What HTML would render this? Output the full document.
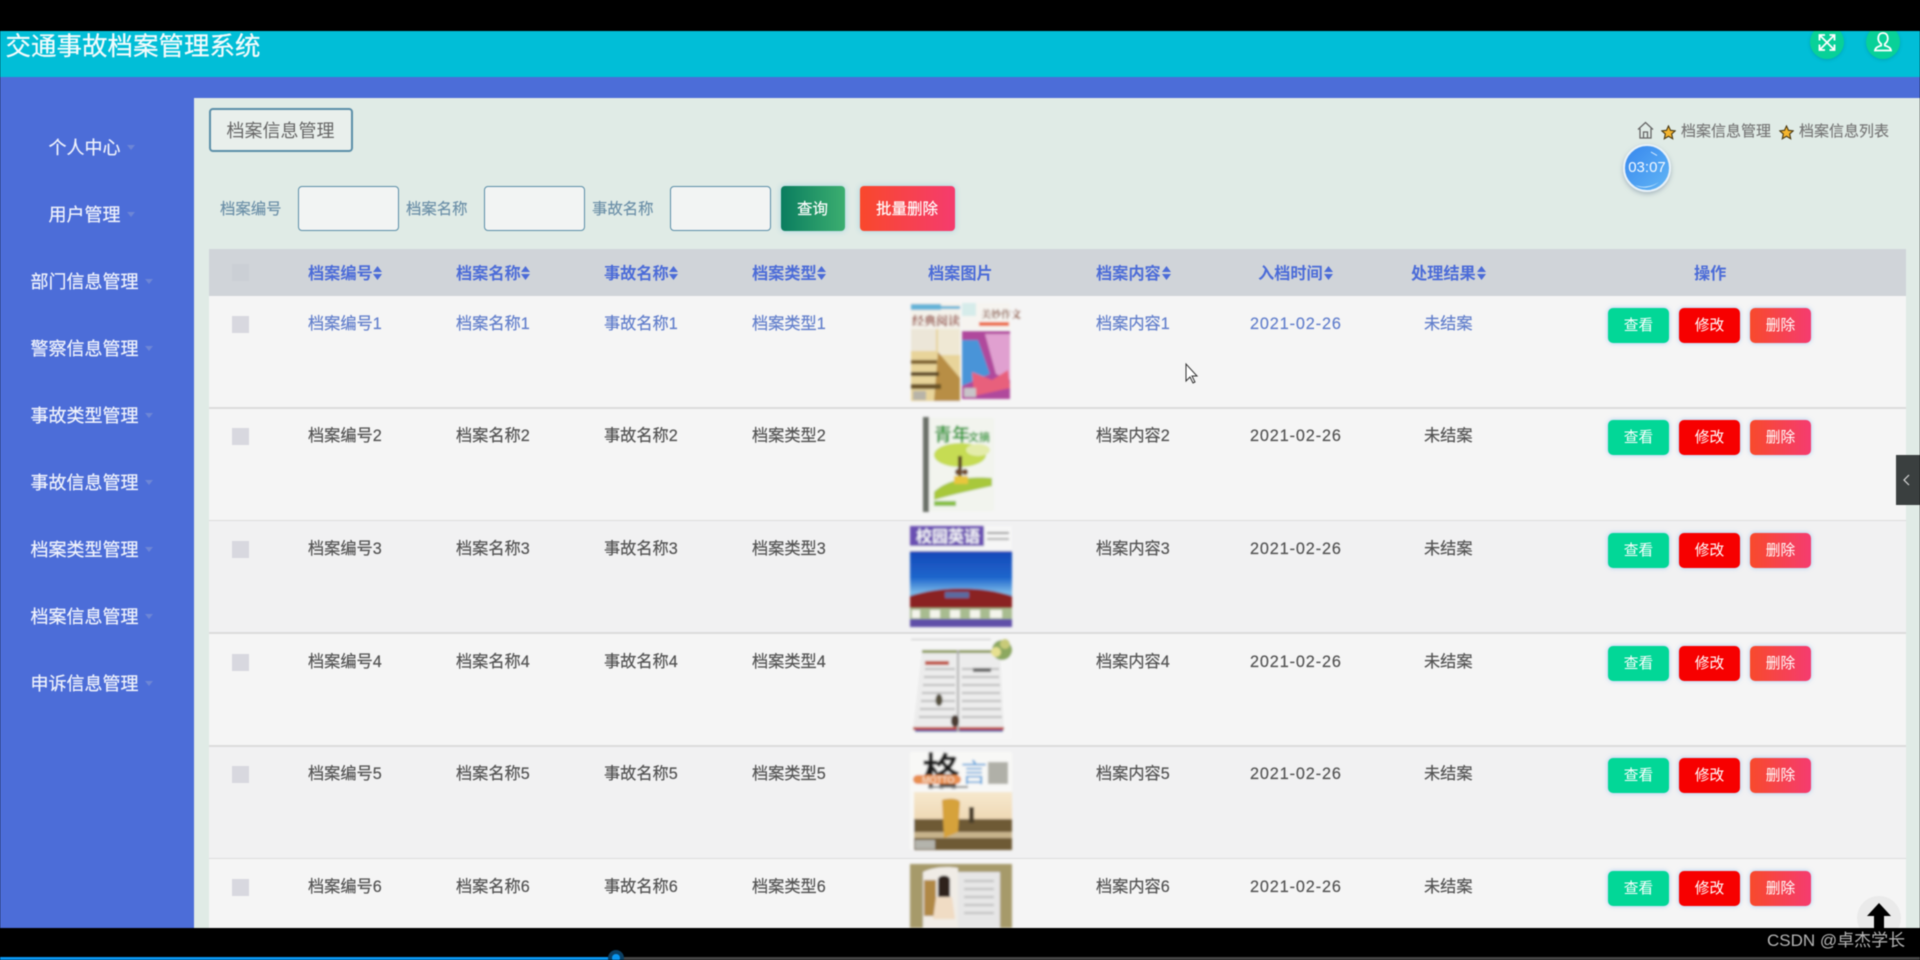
<!DOCTYPE html>
<html lang="zh">
<head>
<meta charset="utf-8">
<title>交通事故档案管理系统</title>
<style>
html,body{margin:0;padding:0;width:1920px;height:960px;overflow:hidden;background:#000;}
body{font-family:"Liberation Sans","Noto Sans CJK SC",sans-serif;position:relative;}
div,span{position:absolute;white-space:nowrap;}
#app{left:0;top:0;width:1920px;height:960px;overflow:hidden;filter:blur(.5px);}
.top{left:0;top:31px;width:1920px;height:46px;background:#01bed7;overflow:hidden;}
.title{left:5.500px;top:-2.500px;font-size:25.5px;line-height:36px;color:#f2fbfc;-webkit-text-stroke:.25px #f2fbfc;}
.rnd{width:34px;height:34px;border-radius:50%;background:#08d198;top:-6px;box-shadow:0 1px 3px rgba(0,120,120,.35);}
.band{left:0;top:77px;width:1920px;height:21px;background:#4c6dd8;}
.side{left:0;top:98px;width:194px;height:830px;background:#4c6dd8;}
.m{color:#f0f3fc;font-size:18px;line-height:26px;left:-.5px;width:170px;text-align:center;-webkit-text-stroke:.2px #f0f3fc;}
.car{width:0;height:0;border-left:4.500px solid transparent;border-right:4.500px solid transparent;border-top:5.500px solid #6d86d6;}
.main{left:194px;top:98px;width:1726px;height:830px;background:#e0ebe6;}
.tag{left:209px;top:108px;width:140px;height:40px;border:2px solid #5a8ea8;border-radius:4px;background:#e9efec;color:#666;font-size:18px;line-height:42px;text-align:center;text-indent:-1px;}
.lb{font-size:15.4px;color:#6b8fa8;line-height:24px;top:198px;-webkit-text-stroke:.15px #6b8fa8;}
.ipt{top:186px;width:99px;height:43px;border:1px solid #5a8ea8;border-radius:4px;background:#f2f4f3;}
.sb{top:186px;height:45px;border-radius:4px;color:#fff;font-size:15.5px;line-height:47px;text-align:center;box-shadow:0 0 6px rgba(90,180,220,.45);-webkit-text-stroke:.15px #fff;text-indent:-1px;}
.thead{left:209px;top:249px;width:1697px;height:47px;background:#d0d4d9;}
.th{top:260.500px;line-height:26px;font-size:16.2px;color:#4c6cd8;font-weight:bold;}
.so{top:265px;width:9px;height:16px;}
.row{left:209px;width:1697px;height:111px;background:#f5f5f5;border-bottom:2px solid #dcdcdc;}
.alt{background:#f1f1f2;}
.cb{left:23px;top:19.500px;width:17px;height:17px;background:#d8d8df;}
.c{top:15.500px;line-height:24px;font-size:16.2px;color:#555;-webkit-text-stroke:.2px #555;}
.r1 .c{color:#6480cc;-webkit-text-stroke:.2px #6480cc;}
.c1{left:99px}.c2{left:247px}.c3{left:395px}.c4{left:543px}.c5{left:887px}.c7{left:1215px}
.c6{left:1041px;letter-spacing:.9px}
.b{top:11.500px;width:61px;height:35px;border-radius:5px;color:#fff;font-size:14.7px;line-height:37px;text-align:center;box-shadow:0 0 5px rgba(110,170,240,.6);}
.b1{left:1399px;background:#02d797;}
.b2{left:1470px;background:#f70000;}
.b3{left:1541px;background:linear-gradient(90deg,#f84a2c,#f53c70);}
.bc{top:119.500px;line-height:24px;font-size:15px;color:#777;-webkit-text-stroke:.15px #777;}
.clock{left:1623px;top:144px;width:44px;height:44px;border:2px solid #e8f1f8;border-radius:50%;background:linear-gradient(135deg,#3787ee,#62b6f6);box-shadow:0 2px 5px rgba(120,140,160,.55);color:#f3f9ff;font-size:15px;line-height:44px;text-align:center;overflow:hidden;}
.tab{left:1896px;top:455px;width:24px;height:50px;background:#3a3f3f;}
.up{left:1857px;top:896px;width:44px;height:44px;border-radius:50%;background:#eaeaea;}
.btm{left:0;top:928px;width:1920px;height:32px;background:#000;}
.wm{left:1767px;top:929px;font-size:17px;line-height:24px;color:#b4b4b4;}
.pg{left:0;top:957px;width:616px;height:3px;background:#0a96f0;}
.pg2{left:616px;top:957px;width:1304px;height:3px;background:#444;}
.dot{left:608px;top:950px;width:16px;height:16px;border-radius:50%;background:#0b3f63;}
.dot2{left:612px;top:954px;width:8px;height:8px;border-radius:50%;background:#0a96f0;}
</style>
</head>
<body>
<div id="app">
  <div class="top">
    <div class="title">交通事故档案管理系统</div>
    <div class="rnd" style="left:1810px"></div>
    <div class="rnd" style="left:1866px"></div>
    <svg style="position:absolute;left:1810px;top:-6px" width="34" height="34" viewBox="0 0 34 34" fill="none" stroke="#fff" stroke-width="1.800"><path d="M9.500 10l15 15M24.500 10l-15 15M9.500 15.500V10h5.500M19.500 10h5v5.500M9.500 19.500V25H15M24.500 19.500V25h-5"/></svg>
    <svg style="position:absolute;left:1866px;top:-6px" width="34" height="34" viewBox="0 0 34 34" fill="none" stroke="#fff" stroke-width="1.800"><path d="M17 8c3.500 0 4.800 2.500 4.800 5.500s-1.800 4.500-3 5.500v1.500c2.500 1 5.700 1.500 6.200 5H9c.5-3.500 3.700-4 6.200-5V19c-1.200-1-3-2.500-3-5.500S13.500 8 17 8z"/></svg>
  </div>
  <div class="band"></div>
  <div class="side"></div>
  <div class="main"></div>

  <div class="m" style="top:134.500px">个人中心</div><div class="car" style="left:127px;top:145px"></div>
  <div class="m" style="top:201.500px">用户管理</div><div class="car" style="left:127px;top:212px"></div>
  <div class="m" style="top:268.500px">部门信息管理</div><div class="car" style="left:145px;top:279px"></div>
  <div class="m" style="top:335.500px">警察信息管理</div><div class="car" style="left:145px;top:346px"></div>
  <div class="m" style="top:402.500px">事故类型管理</div><div class="car" style="left:145px;top:413px"></div>
  <div class="m" style="top:469.500px">事故信息管理</div><div class="car" style="left:145px;top:480px"></div>
  <div class="m" style="top:536.500px">档案类型管理</div><div class="car" style="left:145px;top:547px"></div>
  <div class="m" style="top:603.500px">档案信息管理</div><div class="car" style="left:145px;top:614px"></div>
  <div class="m" style="top:670.500px">申诉信息管理</div><div class="car" style="left:145px;top:681px"></div>

  <div class="tag">档案信息管理</div>

  <svg style="position:absolute;left:1637px;top:121px" width="17" height="18" viewBox="0 0 17 18" fill="none" stroke="#666" stroke-width="1.300"><path d="M1 8.500L8.500 1.500 16 8.500M3 7.500V17h11V7.500M6.500 17v-6h4v6"/></svg>
  <svg style="position:absolute;left:1660.500px;top:124.500px" width="15" height="15" viewBox="0 0 24 24"><path d="M12 1.500l3.200 7 7.600.8-5.700 5.100 1.600 7.500L12 18l-6.700 3.900 1.600-7.500L1.200 9.300l7.600-.8z" fill="#f5b52e" stroke="#4a3a14" stroke-width="1.800"/></svg>
  <span class="bc" style="left:1681px">档案信息管理</span>
  <svg style="position:absolute;left:1778.500px;top:124.500px" width="15" height="15" viewBox="0 0 24 24"><path d="M12 1.500l3.200 7 7.600.8-5.700 5.100 1.600 7.500L12 18l-6.700 3.900 1.600-7.500L1.200 9.300l7.600-.8z" fill="#f5b52e" stroke="#4a3a14" stroke-width="1.800"/></svg>
  <span class="bc" style="left:1799px">档案信息列表</span>
  <div class="clock">03:07</div>
  <svg style="position:absolute;left:1623px;top:144px" width="48" height="48" viewBox="0 0 48 48" fill="none"><path d="M28 8l6 3.500" stroke="#dff0ff" stroke-width="1"/><path d="M12 41c8 3 16 2 24-3-6 5-16 8-24 3z" fill="#cfeafc"/></svg>

  <span class="lb" style="left:220px">档案编号</span>
  <div class="ipt" style="left:298px"></div>
  <span class="lb" style="left:406px">档案名称</span>
  <div class="ipt" style="left:484px"></div>
  <span class="lb" style="left:592px">事故名称</span>
  <div class="ipt" style="left:670px"></div>
  <div class="sb" style="left:781px;width:64px;background:linear-gradient(90deg,#0a7d5f,#3cae70)">查询</div>
  <div class="sb" style="left:860px;width:95px;background:linear-gradient(90deg,#f9482c,#f53c6e)">批量删除</div>

  <div class="thead"><div style="left:23px;top:15px;width:17px;height:17px;background:#cbcfd5"></div></div>
  <span class="th" style="left:308px">档案编号</span>
  <span class="th" style="left:456px">档案名称</span>
  <span class="th" style="left:604px">事故名称</span>
  <span class="th" style="left:752px">档案类型</span>
  <span class="th" style="left:928px">档案图片</span>
  <span class="th" style="left:1096px">档案内容</span>
  <span class="th" style="left:1258px">入档时间</span>
  <span class="th" style="left:1411px">处理结果</span>
  <span class="th" style="left:1694px">操作</span>
  <svg class="so" style="position:absolute;left:373px;top:265px" width="9" height="16" viewBox="0 0 9 16" fill="#4c6cd8"><path d="M4.500 1L9 7H0zM0 9h9l-4.500 6z"/></svg>
  <svg class="so" style="position:absolute;left:521px;top:265px" width="9" height="16" viewBox="0 0 9 16" fill="#4c6cd8"><path d="M4.500 1L9 7H0zM0 9h9l-4.500 6z"/></svg>
  <svg class="so" style="position:absolute;left:669px;top:265px" width="9" height="16" viewBox="0 0 9 16" fill="#4c6cd8"><path d="M4.500 1L9 7H0zM0 9h9l-4.500 6z"/></svg>
  <svg class="so" style="position:absolute;left:817px;top:265px" width="9" height="16" viewBox="0 0 9 16" fill="#4c6cd8"><path d="M4.500 1L9 7H0zM0 9h9l-4.500 6z"/></svg>
  <svg class="so" style="position:absolute;left:1162px;top:265px" width="9" height="16" viewBox="0 0 9 16" fill="#4c6cd8"><path d="M4.500 1L9 7H0zM0 9h9l-4.500 6z"/></svg>
  <svg class="so" style="position:absolute;left:1324px;top:265px" width="9" height="16" viewBox="0 0 9 16" fill="#4c6cd8"><path d="M4.500 1L9 7H0zM0 9h9l-4.500 6z"/></svg>
  <svg class="so" style="position:absolute;left:1477px;top:265px" width="9" height="16" viewBox="0 0 9 16" fill="#4c6cd8"><path d="M4.500 1L9 7H0zM0 9h9l-4.500 6z"/></svg>

  <div class="row r1" style="top:296px">
    <div class="cb"></div>
    <span class="c c1">档案编号1</span><span class="c c2">档案名称1</span><span class="c c3">事故名称1</span><span class="c c4">档案类型1</span><span class="c c5">档案内容1</span><span class="c c6">2021-02-26</span><span class="c c7">未结案</span>
    <div class="b b1" style="top:12px">查看</div><div class="b b2" style="top:12px">修改</div><div class="b b3" style="top:12px">删除</div>
  </div>
  <div class="row" style="top:408.700px">
    <div class="cb"></div>
    <span class="c c1">档案编号2</span><span class="c c2">档案名称2</span><span class="c c3">事故名称2</span><span class="c c4">档案类型2</span><span class="c c5">档案内容2</span><span class="c c6">2021-02-26</span><span class="c c7">未结案</span>
    <div class="b b1">查看</div><div class="b b2">修改</div><div class="b b3">删除</div>
  </div>
  <div class="row alt" style="top:521.300px">
    <div class="cb"></div>
    <span class="c c1">档案编号3</span><span class="c c2">档案名称3</span><span class="c c3">事故名称3</span><span class="c c4">档案类型3</span><span class="c c5">档案内容3</span><span class="c c6">2021-02-26</span><span class="c c7">未结案</span>
    <div class="b b1">查看</div><div class="b b2">修改</div><div class="b b3">删除</div>
  </div>
  <div class="row" style="top:634px">
    <div class="cb"></div>
    <span class="c c1">档案编号4</span><span class="c c2">档案名称4</span><span class="c c3">事故名称4</span><span class="c c4">档案类型4</span><span class="c c5">档案内容4</span><span class="c c6">2021-02-26</span><span class="c c7">未结案</span>
    <div class="b b1">查看</div><div class="b b2">修改</div><div class="b b3">删除</div>
  </div>
  <div class="row alt" style="top:746.600px">
    <div class="cb"></div>
    <span class="c c1">档案编号5</span><span class="c c2">档案名称5</span><span class="c c3">事故名称5</span><span class="c c4">档案类型5</span><span class="c c5">档案内容5</span><span class="c c6">2021-02-26</span><span class="c c7">未结案</span>
    <div class="b b1">查看</div><div class="b b2">修改</div><div class="b b3">删除</div>
  </div>
  <div class="row" style="top:859.200px">
    <div class="cb"></div>
    <span class="c c1">档案编号6</span><span class="c c2">档案名称6</span><span class="c c3">事故名称6</span><span class="c c4">档案类型6</span><span class="c c5">档案内容6</span><span class="c c6">2021-02-26</span><span class="c c7">未结案</span>
    <div class="b b1">查看</div><div class="b b2">修改</div><div class="b b3">删除</div>
  </div>

  <svg style="position:absolute;left:0;top:0" width="1920" height="960" viewBox="0 0 1920 960">
    <defs>
      <filter id="bl" x="-5%" y="-5%" width="110%" height="110%"><feGaussianBlur stdDeviation="1"/></filter>
      <linearGradient id="sky" x1="0" y1="0" x2="0" y2="1"><stop offset="0" stop-color="#1648b8"/><stop offset=".35" stop-color="#1e66cc"/><stop offset=".55" stop-color="#7ab8e8"/><stop offset=".7" stop-color="#3f88d4"/></linearGradient>
      <linearGradient id="sand" x1="0" y1="0" x2="0" y2="1"><stop offset="0" stop-color="#f6e8ce"/><stop offset="1" stop-color="#e8c898"/></linearGradient>
    </defs>
    <g filter="url(#bl)">
      <!-- row 1 covers -->
      <rect x="911" y="303" width="49" height="99" fill="#f4f2ea"/>
      <rect x="911" y="304" width="30" height="6" fill="#63b4d8"/><rect x="941" y="306" width="19" height="3" fill="#63b4d8"/>
      <text x="912" y="325" font-size="12" font-weight="bold" fill="#8a2c20" font-family="Noto Serif CJK SC,serif">经典阅读</text>
      <rect x="911" y="329" width="49" height="72" fill="#e8d49a"/>
      <rect x="911" y="329" width="25" height="22" fill="#ece6d8"/>
      <rect x="938" y="329" width="22" height="26" fill="#efe8d4"/>
      <path d="M938 352l22 26v23h-26z" fill="#b88e44"/>
      <rect x="911" y="360" width="26" height="4" fill="#7b5e2c"/><rect x="911" y="372" width="28" height="4" fill="#5c4620"/><rect x="911" y="384" width="30" height="5" fill="#6a5226"/>
      <rect x="913" y="391" width="13" height="9" fill="#b8b4a8"/>
      <rect x="962" y="303" width="48" height="27" fill="#f6f4f0"/>
      <text x="981" y="318" font-size="10" font-weight="bold" fill="#8b5a4a" font-family="Noto Serif CJK SC,serif">美妙作文</text>
      <rect x="962" y="303" width="14" height="13" fill="#d6ecea"/>
      <rect x="979" y="322" width="30" height="4" fill="#ee6a42"/>
      <rect x="962" y="331" width="48" height="68" fill="#b04a9c"/>
      <path d="M962 340l16 0 12 34-28 12z" fill="#4a94d8"/>
      <path d="M985 334h25v46l-14-6z" fill="#e0a0d0"/>
      <path d="M972 372l20 8 16-10 2 18-36 8z" fill="#e8607c"/>
      <rect x="964" y="388" width="12" height="9" fill="#c8c4c8"/>
      <!-- row 2 book -->
      <rect x="923" y="417" width="6" height="95" fill="#6a6f68"/>
      <rect x="929" y="418" width="65" height="93" fill="#f2f4ee"/>
      <text x="934" y="441" font-size="18" font-weight="bold" fill="#1e9a2a">青年</text>
      <text x="968" y="441" font-size="11" font-weight="bold" fill="#1e9a2a">文摘</text>
      <ellipse cx="960" cy="455" rx="26" ry="12" fill="#c6dc52"/>
      <ellipse cx="978" cy="450" rx="12" ry="6" fill="#e4ecaa"/>
      <rect x="958" y="456" width="4" height="20" fill="#5d4426"/>
      <path d="M934 500v-8c14-14 40-16 58-14v8c-18 4-38 8-58 14z" fill="#a8c83a"/>
      <rect x="954" y="476" width="14" height="8" fill="#e8c63e"/>
      <circle cx="958" cy="472" r="3" fill="#704a2a"/><circle cx="965" cy="472" r="3" fill="#704a2a"/>
      <rect x="934" y="501" width="22" height="5" fill="#88c040"/>
      <!-- row 3 -->
      <rect x="910" y="526" width="102" height="101" fill="#f6f6f6"/>
      <rect x="910" y="526" width="74" height="20" fill="#6a50b2"/>
      <text x="916" y="542" font-size="16" font-weight="bold" fill="#f4f4f8">校园英语</text>
      <rect x="987" y="532" width="22" height="2" fill="#999"/><rect x="987" y="538" width="22" height="2" fill="#aaa"/>
      <rect x="910" y="551" width="102" height="76" fill="url(#sky)"/>
      <path d="M910 596c30-10 72-10 102 0v14H910z" fill="#8a2422"/>
      <rect x="945" y="592" width="24" height="6" fill="#5c6aa0"/>
      <rect x="910" y="608" width="102" height="11" fill="#a8bc90"/>
      <path d="M912 610h8v8h-8zM930 610h10v8h-10zM950 610h10v8h-10zM970 610h10v8h-10zM990 610h12v8h-12z" fill="#f4f4ec"/>
      <rect x="910" y="619" width="102" height="8" fill="#5e50a8"/>
      <!-- row 4 -->
      <rect x="910" y="639" width="102" height="100" fill="#f6f6f6"/>
      <rect x="911" y="639" width="80" height="1" fill="#c0c0c0"/>
      <path d="M922 650h78l4 80H913z" fill="#ececec"/>
      <path d="M922 650h78v3h-78z" fill="#8a9a50"/><path d="M913 727h91v3h-91z" fill="#c04838"/>
      <path d="M915 730h88v2h-88z" fill="#3c5cae"/>
      <rect x="957" y="650" width="2" height="82" fill="#b0b0b0"/>
      <g fill="#bcbcbc">
        <rect x="925" y="668" width="30" height="2"/><rect x="924" y="676" width="31" height="2"/><rect x="923" y="684" width="32" height="2"/><rect x="922" y="692" width="33" height="2"/><rect x="921" y="700" width="34" height="2"/><rect x="920" y="708" width="35" height="2"/><rect x="919" y="716" width="36" height="2"/>
        <rect x="962" y="668" width="37" height="2"/><rect x="962" y="676" width="37" height="2"/><rect x="962" y="684" width="38" height="2"/><rect x="962" y="692" width="38" height="2"/><rect x="962" y="700" width="39" height="2"/><rect x="962" y="708" width="39" height="2"/><rect x="962" y="716" width="40" height="2"/>
      </g>
      <rect x="925" y="661" width="24" height="4" fill="#c0503c"/>
      <rect x="973" y="668" width="18" height="4" fill="#666"/>
      <ellipse cx="939" cy="700" rx="3.500" ry="6" fill="#55503c"/>
      <ellipse cx="955" cy="721" rx="4" ry="6" fill="#4a3a30"/>
      <circle cx="1002" cy="650" r="10" fill="#8ca860"/>
      <circle cx="996" cy="652" r="5" fill="#e6e090"/><circle cx="1005" cy="644" r="5" fill="#c8ca78"/>
      <!-- row 5 -->
      <rect x="910" y="752" width="102" height="98" fill="#f8f8f6"/>
      <text x="922" y="785" font-size="38" font-weight="bold" fill="#1a1a1a" font-family="Noto Sans CJK SC,sans-serif">格</text>
      <text x="961" y="782" font-size="26" fill="#5ea4dc">言</text>
      <rect x="988" y="762" width="20" height="22" fill="#b0b0a8"/>
      <rect x="913" y="775" width="48" height="9" rx="4.500" fill="#e88e50"/>
      <text x="922" y="783" font-size="9" fill="#f8f0e0">MOTTO</text>
      <rect x="928" y="786" width="40" height="2" fill="#888"/>
      <rect x="914" y="792" width="98" height="58" fill="url(#sand)"/>
      <rect x="914" y="819" width="98" height="31" fill="#6e5a34"/>
      <rect x="914" y="832" width="98" height="6" fill="#c8b48c"/>
      <path d="M942 800c6-2 16-2 18 2l-2 30-14 6z" fill="#d6a23a"/>
      <rect x="969" y="807" width="5" height="16" fill="#4a3e2c"/>
      <rect x="915" y="840" width="20" height="9" fill="#b4b4ac"/>
      <!-- row 6 -->
      <rect x="910" y="864" width="102" height="64" fill="#a69a6a"/>
      <path d="M923 872c10-5 24-6 35-4v60h-35z" fill="#f0ece6"/>
      <path d="M958 872h42v56h-42z" fill="#e6e6e6"/>
      <g fill="#c0c0c0"><rect x="964" y="880" width="30" height="2"/><rect x="964" y="888" width="30" height="2"/><rect x="964" y="896" width="30" height="2"/><rect x="964" y="904" width="30" height="2"/><rect x="964" y="912" width="30" height="2"/></g>
      <rect x="924" y="880" width="12" height="36" fill="#b08844"/>
      <path d="M938 880c0-6 12-6 12 0v18h-12z" fill="#2e241e"/>
      <path d="M936 897h16l3 22h-22z" fill="#f0dcc4"/>
    </g>
    <!-- cursor -->
    <path d="M1186 364v17l4-4 3 6 2-1-3-6h5z" fill="#fff" stroke="#333" stroke-width="1"/>
  </svg>

  <div class="tab"></div>
  <svg style="position:absolute;left:1900px;top:472px" width="14" height="16" viewBox="0 0 14 16" fill="none" stroke="#d8d8d8" stroke-width="1.200"><path d="M9 3L4 8l5 5"/></svg>

  <div class="up"></div>
  <svg style="position:absolute;left:1866px;top:902px" width="26" height="28" viewBox="0 0 26 28"><path d="M13 1L25 14h-7v14H8V14H1z" fill="#000"/></svg>

  <div class="btm"></div>
  <div class="wm">CSDN @卓杰学长</div>
  <div class="pg2"></div>
  <div class="pg"></div>
  <div class="dot"></div>
  <div class="dot2"></div>
  <div style="left:0;top:0;width:1920px;height:31px;background:#000"></div>
</div>
</body>
</html>
